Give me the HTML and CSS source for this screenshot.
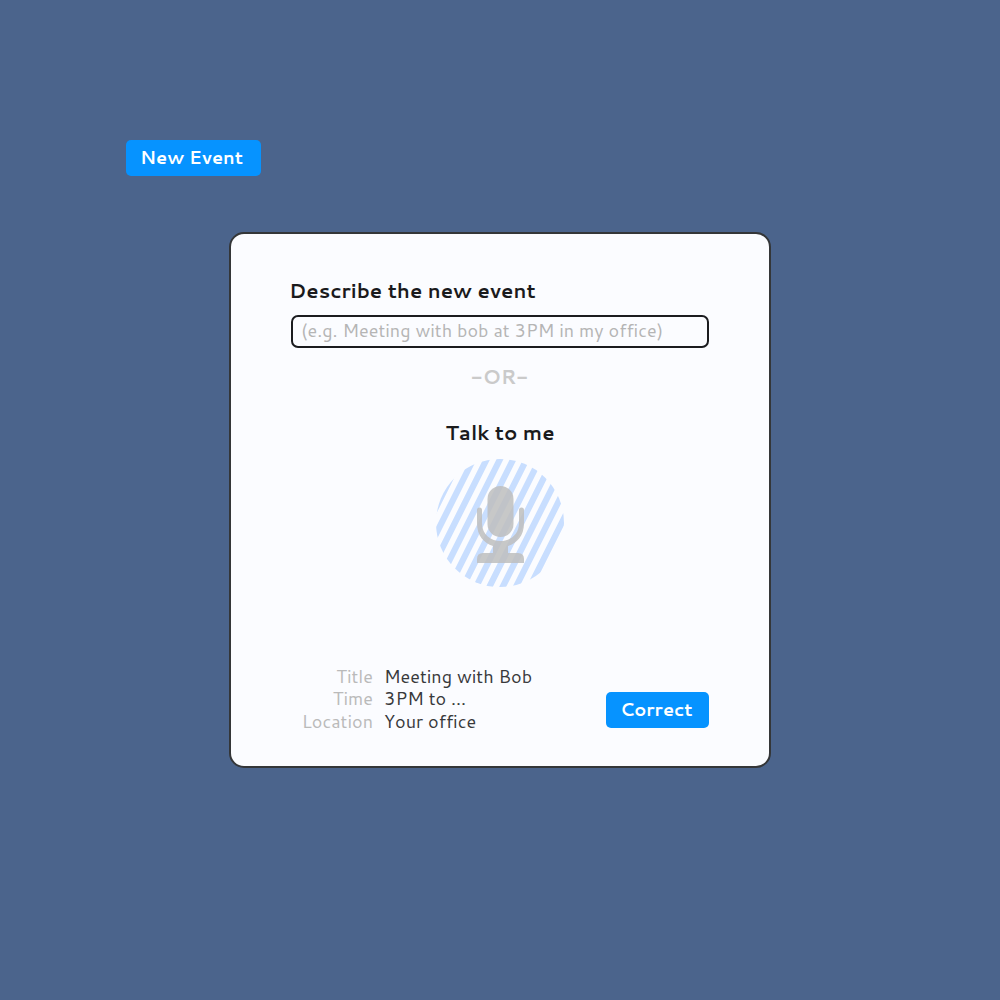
FILE: index.html
```html
<!DOCTYPE html>
<html lang="en">
<head>
<meta charset="utf-8">
<title>New Event</title>
<link rel="stylesheet" href="styles.css">
</head>
<body>
<button class="button new-event" type="button">New Event</button>
<main class="dialog">
  <label class="heading" for="description">Describe the new event</label>
  <input class="description" id="description" type="text" placeholder="(e.g. Meeting with bob at 3PM in my office)">
  <p class="divider">-OR-</p>
  <h2 class="talk">Talk to me</h2>
  <svg class="microphone" viewBox="0 0 128 128" role="img" aria-label="Microphone">
    <defs><clipPath id="disc"><circle cx="64" cy="64" r="64"/></clipPath></defs>
    <g clip-path="url(#disc)">
      <path stroke="#c8deff" stroke-width="6.2" d="M29.2-10l-75 150M42.5-10l-75 150M55.8-10l-75 150M69.1-10l-75 150M82.4-10l-75 150M95.7-10l-75 150M109-10l-75 150M122.3-10l-75 150M135.6-10l-75 150M148.9-10l-75 150M162.7-10l-75 150"/>
    </g>
    <g opacity=".85" fill="#bfbfbf">
      <rect x="51.5" y="27" width="26" height="51" rx="13"/>
      <path d="M41 51a2.5 2.5 0 0 1 5 0v13c0 24 37 24 37 0V51a2.5 2.5 0 0 1 5 0v13c0 13-7 20-16 23v7h10q6 0 6 6v4H41v-4q0-6 6-6h10v-7c-9-3-16-10-16-23z"/>
    </g>
  </svg>
  <footer class="summary">
    <dl class="details">
      <dt>Title</dt><dd>Meeting with Bob</dd>
      <dt>Time</dt><dd>3PM to ...</dd>
      <dt>Location</dt><dd>Your office</dd>
    </dl>
    <button class="button" type="button">Correct</button>
  </footer>
</main>
</body>
</html>
```
FILE: styles.css
```css
* { box-sizing: border-box; }
body {
  margin: 0;
  min-height: 1000px;
  padding: 140px 0 0 126px;
  background: #4b648c;
  font-family: Cantarell, "Noto Sans", sans-serif;
  font-size: 18px;
}
.button {
  height: 36px;
  padding: 0 0 1px 14px;
  border: 0;
  border-radius: 5px;
  background: #0693ff;
  color: #fff;
  font: 600 18px/35px Cantarell, "Noto Sans", sans-serif;
  text-align: left;
  white-space: nowrap;
}
.new-event { display: block; width: 135px; }
.dialog {
  display: flex;
  flex-direction: column;
  width: 542px;
  height: 536px;
  margin: 56px 0 0 103px;
  padding: 42px 60px 38px 58px;
  border: 2px solid #343638;
  border-radius: 15px;
  background: #fbfcff;
  color: #1a1a1c;
}
.heading { font-size: 20px; font-weight: 600; line-height: 28px; }
.description {
  width: 418px;
  height: 33px;
  margin: 11px 0 0 2px;
  padding: 0 9px 3px 8px;
  border: 2px solid #1b1c1f;
  border-radius: 7px;
  background: #fbfcff;
  font: 18px Cantarell, "Noto Sans", sans-serif;
}
.description::placeholder { color: #b5b5b5; opacity: 1; }
.divider { margin: 14px 0 0; padding-left: 1px; color: #cacaca; font-size: 20px; font-weight: 600; line-height: 28px; text-align: center; }
.talk { margin: 28px 0 0; padding-left: 2px; font-size: 20px; font-weight: 600; line-height: 28px; text-align: center; }
.microphone { width: 128px; height: 128px; margin: 13px 0 0 147px; }
.summary { display: flex; justify-content: space-between; align-items: flex-end; margin-top: auto; }
.summary .button { width: 103px; }
.details { display: grid; grid-template-columns: 84px auto; column-gap: 11px; margin: 0 0 -4px; line-height: 22.5px; }
dt { color: #bababa; text-align: right; }
dd { margin: 0; color: #38393b; }
```
